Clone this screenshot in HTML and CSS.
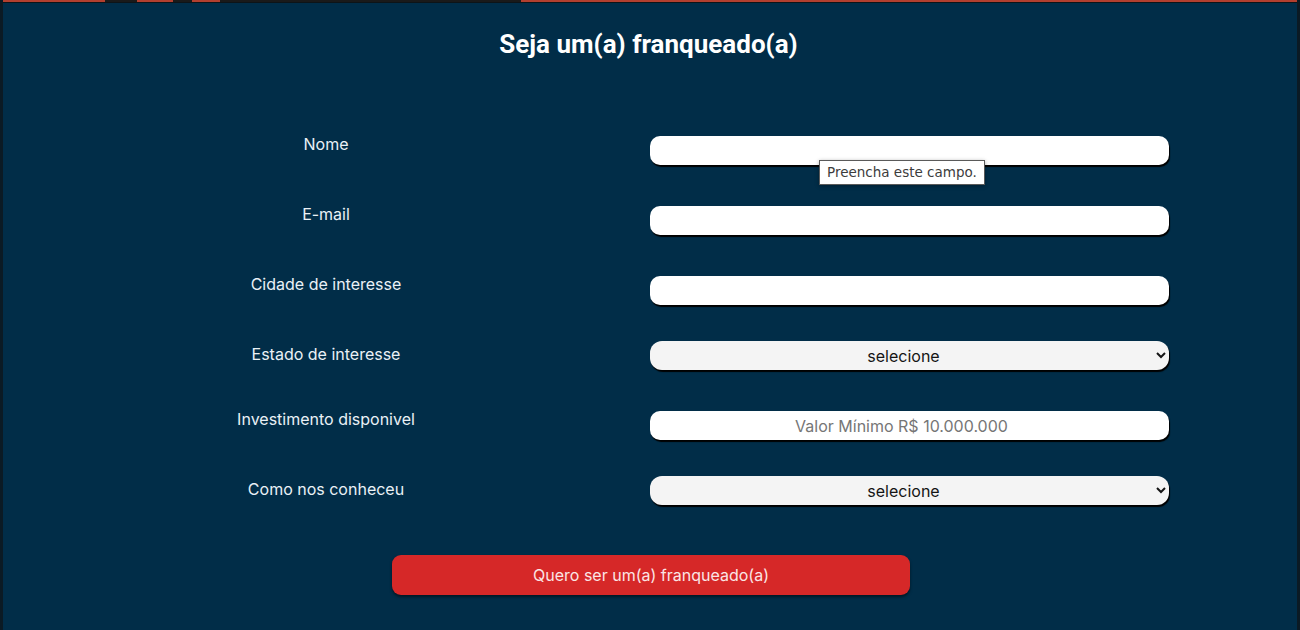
FILE: index.html
```html
<!DOCTYPE html>
<html lang="pt-BR">
<head>
<meta charset="utf-8">
<title>Seja um(a) franqueado(a)</title>
<link rel="stylesheet" href="styles.css">
</head>
<body>
<div class="topstrip">
  <span class="seg red w105"></span>
  <span class="seg dark w32"></span>
  <span class="seg red w36"></span>
  <span class="seg dark w19"></span>
  <span class="seg red w28"></span>
  <span class="seg dark w301"></span>
  <span class="seg red grow"></span>
</div>
<main class="page">
  <h1 class="title">Seja um(a) franqueado(a)</h1>
  <form class="form">
    <div class="row">
      <label class="label" for="nome">Nome</label>
      <div class="field-wrap">
        <input class="field" id="nome" type="text">
        <div class="tooltip">Preencha este campo.</div>
      </div>
    </div>
    <div class="row">
      <label class="label" for="email">E-mail</label>
      <div class="field-wrap"><input class="field" id="email" type="email"></div>
    </div>
    <div class="row">
      <label class="label" for="cidade">Cidade de interesse</label>
      <div class="field-wrap"><input class="field" id="cidade" type="text"></div>
    </div>
    <div class="row row-short">
      <label class="label" for="estado">Estado de interesse</label>
      <div class="field-wrap">
        <select class="field select" id="estado">
          <option>selecione</option>
        </select>
      </div>
    </div>
    <div class="row">
      <label class="label" for="inv">Investimento disponivel</label>
      <div class="field-wrap"><input class="field centered" id="inv" type="text" placeholder="Valor Mínimo R$ 10.000.000"></div>
    </div>
    <div class="row">
      <label class="label" for="como">Como nos conheceu</label>
      <div class="field-wrap">
        <select class="field select" id="como">
          <option>selecione</option>
        </select>
      </div>
    </div>
    <div class="actions">
      <button class="submit" type="button">Quero ser um(a) franqueado(a)</button>
    </div>
  </form>
</main>
</body>
</html>
```

FILE: styles.css
```css
html, body {
  margin: 0;
  padding: 0;
}
body {
  background: #012d48;
  font-family: Inter, Roboto, "Liberation Sans", sans-serif;
  color: #eef3f7;
  height: 630px;
  overflow: hidden;
  border-left: 3px solid #0b1a24;
  border-right: 3px solid #0b1a24;
  box-sizing: border-box;
}
.topstrip {
  display: flex;
  height: 2px;
  border-bottom: 1px solid #0d1418;
  margin-left: -3px;
  margin-right: -3px;
}
.seg { display: block; height: 2px; }
.red { background: #b33f2f; }
.dark { background: #1a1a1a; }
.w105 { width: 105px; }
.w32 { width: 32px; }
.w36 { width: 36px; }
.w19 { width: 19px; }
.w28 { width: 28px; }
.w301 { width: 301px; }
.grow { flex: 1; }

.page {
  padding-top: 26px;
}
.title {
  margin: 0;
  text-align: center;
  font-family: Roboto, "Liberation Sans", sans-serif;
  font-weight: 700;
  font-size: 26px;
  line-height: 30px;
  color: #ffffff;
  margin-left: -3px;
}
.form {
  margin-top: 77px;
}
.row {
  display: grid;
  grid-template-columns: 647px 650px;
  height: 30px;
  margin-bottom: 40px;
  align-items: start;
}
.row-short {
  margin-bottom: 35px;
}
.label {
  text-align: center;
  font-size: 16px;
  line-height: 16px;
  color: #eaf1f6;
  padding-right: 1px;
}
.field-wrap {
  position: relative;
  width: 519px;
}
.field {
  display: block;
  box-sizing: border-box;
  width: 519px;
  height: 29px;
  border: none;
  border-radius: 10px;
  background: #ffffff;
  box-shadow: 1px 2px 1px #000;
  font-family: Inter, Roboto, "Liberation Sans", sans-serif;
  font-size: 16px;
  color: #222;
  padding: 0 10px;
  outline: none;
}
.centered {
  text-align: center;
  padding: 0 26px 0 10px;
}
.centered::placeholder {
  color: #767676;
}
.select {
  margin-top: -5px;
  height: 29px;
  background: #f4f4f4;
  text-align: center;
  text-align-last: center;
  color: #151515;
  border-radius: 12px;
  padding: 0 4px;
}
.tooltip {
  position: absolute;
  left: 169px;
  top: 24px;
  height: 25px;
  box-sizing: border-box;
  padding: 0 7px;
  background: #ffffff;
  border: 1px solid #5a5a5a;
  box-shadow: 0 1px 4px rgba(0, 0, 0, 0.35);
  font-family: "DejaVu Sans", "Open Sans", sans-serif;
  font-size: 13.5px;
  line-height: 23px;
  color: #3c3c3c;
  white-space: nowrap;
}
.actions {
  display: flex;
  justify-content: center;
  padding-top: 4px;
}
.submit {
  width: 518px;
  height: 40px;
  border: none;
  border-radius: 9px;
  background: #d62828;
  color: #fbe5e5;
  font-family: Inter, Roboto, sans-serif;
  font-size: 16px;
  box-shadow: 0 2px 3px rgba(0, 0, 0, 0.5);
  margin-left: 2px;
}
```
